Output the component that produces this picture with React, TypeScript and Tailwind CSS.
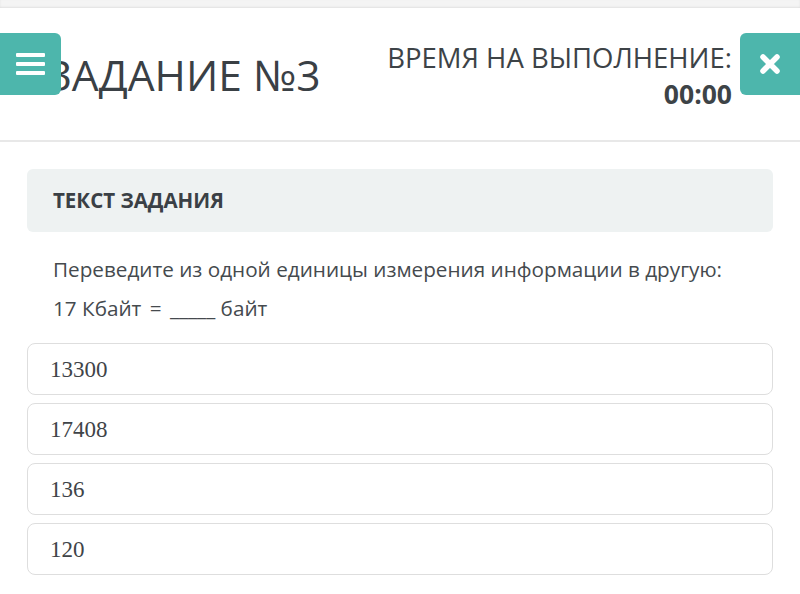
import React from 'react';

const answers = ['13300', '17408', '136', '120'];

function MenuButton() {
  return (
    <button className="absolute left-0 top-[25px] flex h-[62px] w-[61px] items-center justify-center rounded-r-[6px] bg-[#4db6ac]">
      <svg width="29" height="24" viewBox="0 0 29 24">
        <rect x="0" y="1" width="29" height="4" rx="1" fill="#fff" />
        <rect x="0" y="10" width="29" height="4" rx="1" fill="#fff" />
        <rect x="0" y="19" width="29" height="4" rx="1" fill="#fff" />
      </svg>
    </button>
  );
}

function CloseButton() {
  return (
    <button className="absolute right-0 top-[25px] flex h-[62px] w-[60px] items-center justify-center rounded-l-[6px] bg-[#4db6ac]">
      <svg width="22" height="20" viewBox="0 0 22 20">
        <path d="M4 3 L18 17 M18 3 L4 17" stroke="#fff" strokeWidth="5.5" strokeLinecap="round" />
      </svg>
    </button>
  );
}

export default function App() {
  return (
    <div className="min-h-[594px] w-[800px] bg-white text-[#3d4347] [font-family:'Open_Sans',sans-serif]">
      <div className="h-[8px] bg-[#f4f4f4] shadow-[inset_0_-1px_2px_rgba(0,0,0,0.08)]" />
      <header className="relative flex h-[134px] items-start justify-between border-b-2 border-[#e8e8e8] pl-[47px] pr-[68px] pt-[36px]">
        <h1 className="mt-[10px] text-[42.5px] font-normal leading-none text-[#3a4045]">ЗАДАНИЕ №3</h1>
        <div className="text-right">
          <div className="text-[27.5px] leading-none">ВРЕМЯ НА ВЫПОЛНЕНИЕ:</div>
          <div className="mt-[9px] text-[26.5px] font-bold leading-none">00:00</div>
        </div>
        <MenuButton />
        <CloseButton />
      </header>

      <main className="px-[27px] pt-[27px]">
        <div className="flex h-[63px] items-center rounded-[6px] bg-[#eef2f2] px-[26px]">
          <h2 className="text-[20.5px] font-bold leading-none text-[#3a4045]">ТЕКСТ ЗАДАНИЯ</h2>
        </div>

        <div className="mt-[18px] px-[26px] text-[20.7px] leading-[39px] text-[#454a4e]">
          <p>Переведите из одной единицы измерения информации в другую:</p>
          <p>
            17 Кбайт <span className="mx-[3px]">=</span> _____ байт
          </p>
        </div>

        <div className="mt-[15px] flex flex-col gap-2">
          {answers.map((a) => (
            <div
              key={a}
              className="flex h-[52px] items-center rounded-[8px] border border-[#dedede] bg-white px-[22px] pt-[2px] text-[23px] text-[#3f4448] [font-family:'Liberation_Serif',serif]"
            >
              {a}
            </div>
          ))}
        </div>
      </main>
    </div>
  );
}
